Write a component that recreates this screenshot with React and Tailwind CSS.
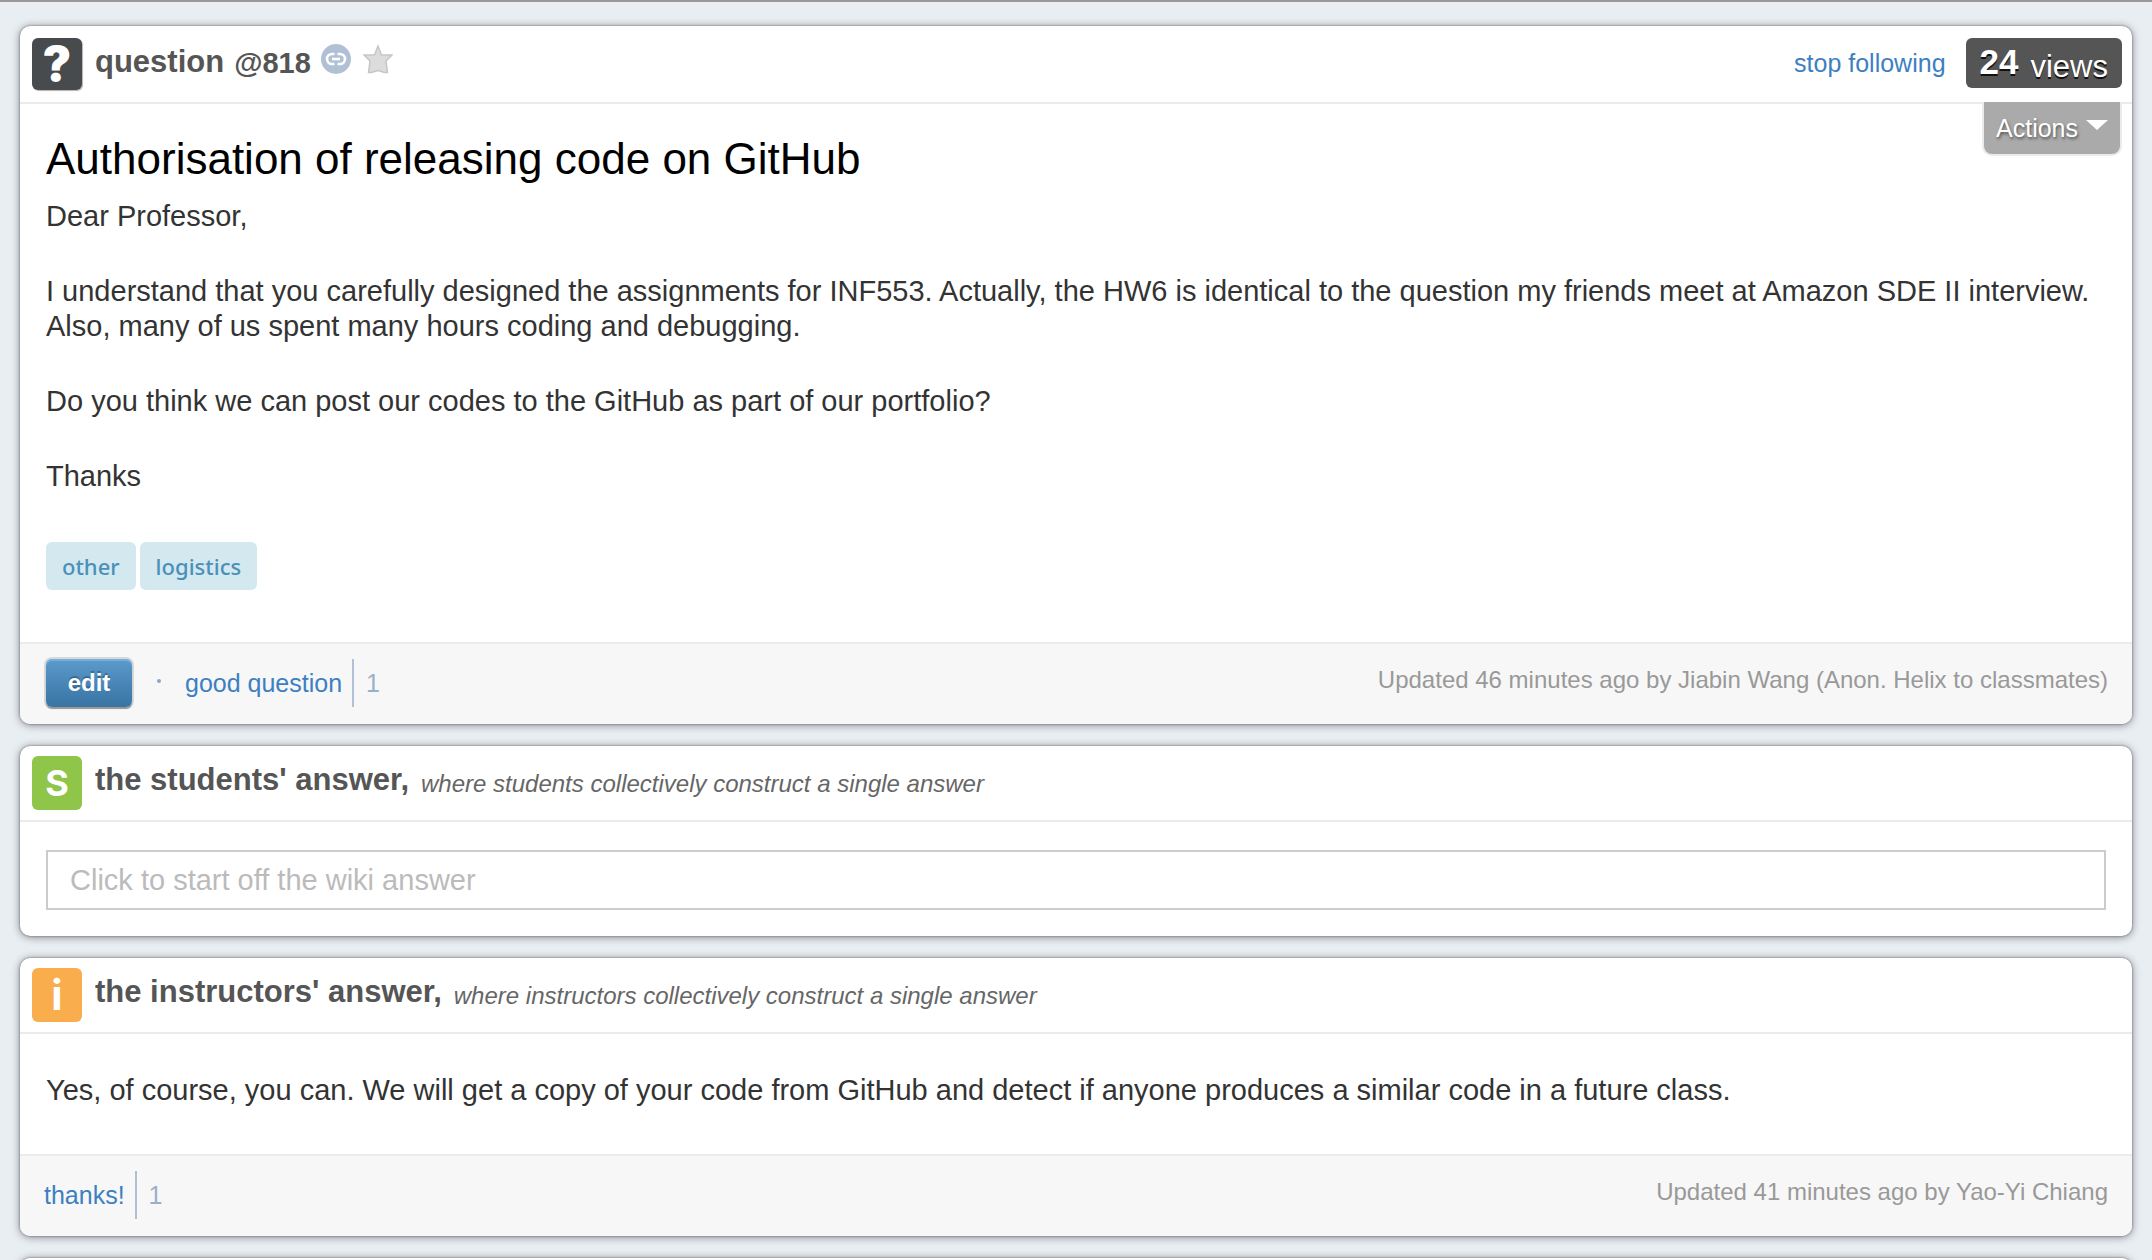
import React from "react";

const small = "text-[25px] leading-[30px]";
const note = "text-[24px]";
const link = "text-[#3d7fc1] hover:underline";

function Card({ children, className = "" }) {
  return (
    <section className={`rounded-[10px] bg-white shadow-[0_0_2px_rgba(0,0,0,0.5),0_1px_8px_rgba(0,0,0,0.45)] ${className}`}>
      {children}
    </section>
  );
}

function Badge({ className, children }) {
  return (
    <span
      aria-hidden="true"
      className={`flex w-[50px] shrink-0 items-center justify-center rounded-md leading-none text-white ${className}`}
    >
      {children}
    </span>
  );
}

function LinkIcon() {
  return (
    <svg viewBox="0 0 30 30" className="size-[30px]" aria-hidden="true">
      <circle cx="15" cy="15" r="15" fill="#b1c1d5" />
      <g fill="none" stroke="#fff" strokeWidth="2.6">
        <path d="M13.500 10H11a5 5 0 0 0 0 10h2.500M16.500 10H19a5 5 0 0 1 0 10h-2.500" />
        <path d="M11 15h8" />
      </g>
    </svg>
  );
}

function StarIcon() {
  return (
    <svg viewBox="0 0 30 30" className="size-[30px]" aria-hidden="true">
      <path
        d="M15 2l3.500 9H29l-6 6 1.500 11.500h-3L15 26.500l-6.500 2h-3L7 17l-6-6h10.500z"
        fill="#dcdcdc"
        stroke="#c6c6c6"
        strokeWidth="1.500"
      />
    </svg>
  );
}

function AnswerHeader({ badge, letter, title, hint }) {
  return (
    <header className="flex h-[76px] items-start gap-[13px] border-b-2 border-[#ebebeb] px-3 pt-2.5">
      <Badge className={`h-[54px] font-['Inter',sans-serif] ${badge}`}>{letter}</Badge>
      <div className="flex items-end gap-3">
        <h2 className="text-[31px] font-bold leading-[48px] text-[#555]">{title}</h2>
        <p className={`${note} leading-10 italic text-[#666]`}>{hint}</p>
      </div>
    </header>
  );
}

function Vote({ label, count }) {
  return (
    <div className="flex h-12 items-center">
      <a href="#vote" className={`${small} ${link} pr-2.5`}>{label}</a>
      <span className={`${small} flex h-12 items-center border-l-2 border-[#b1c1d5] pl-3 text-[#9ab0c9]`}>{count}</span>
    </div>
  );
}

function Footer({ children, updated, className }) {
  return (
    <footer className={`flex h-[82px] items-start justify-between rounded-b-[10px] border-t-2 border-[#ebebeb] bg-[#f7f7f7] pr-6 ${className}`}>
      <div className="flex pt-[15px]">{children}</div>
      <p className={`${note} pt-[21px] leading-[30px] text-[#999]`}>{updated}</p>
    </footer>
  );
}

function Tag({ children }) {
  return (
    <a
      href="#tag"
      className="flex h-12 items-center rounded-md bg-[#d4e8f0] px-4 font-['Noto_Sans',sans-serif] text-[22px] font-medium text-[#4a90b8]"
    >
      {children}
    </a>
  );
}

export default function App() {
  return (
    <main className="h-screen overflow-hidden border-t-2 border-[#999] bg-[#e9eef3] px-5 pt-6 font-['Liberation_Sans',Arial,sans-serif]">
      <div className="flex flex-col gap-[22px]">
        <Card>
          <header className="flex h-[78px] items-start justify-between border-b-2 border-[#ebebeb] pl-3 pr-2.5 pt-3">
            <div className="flex items-start gap-[13px]">
              <Badge className="h-[52px] bg-[#474b4e] font-['Inter',sans-serif] text-[48px] font-black shadow-[1px_1px_1px_rgba(0,0,0,0.3)]">?</Badge>
              <div className="flex items-start gap-2.5 text-[#555]">
                <h2 className="text-[31px] font-bold leading-[48px]">question</h2>
                <span className="text-[29px] font-bold leading-[50px]">@818</span>
                <button type="button" aria-label="Copy link" className="cursor-pointer pt-1.5">
                  <LinkIcon />
                </button>
                <button type="button" aria-label="Favorite" className="cursor-pointer pl-0.5 pt-1.5">
                  <StarIcon />
                </button>
              </div>
            </div>
            <div className="flex items-start gap-5">
              <a href="#follow" className={`${small} ${link} pt-2.5`}>stop following</a>
              <div className="relative">
                <p className="flex h-[50px] items-start gap-3 rounded-md bg-[#555] px-3.5 text-white [text-shadow:0_2px_0_#111]">
                  <span className="text-[35px] font-bold leading-[48px]">24</span>
                  <span className="text-[31px] leading-[58px]">views</span>
                </p>
                <button
                  type="button"
                  className={`${small} absolute right-0 top-16 flex h-[54px] cursor-pointer items-center gap-2 whitespace-nowrap rounded-b-[10px] border-2 border-t-0 border-[#ebebeb] bg-[#aaa] px-3 text-white [text-shadow:1px_2px_3px_rgba(0,0,0,0.5)]`}
                >
                  Actions
                  <svg viewBox="0 0 22 10" className="mb-1.5 h-2.5 w-[22px]" aria-hidden="true">
                    <path d="M0 0h22L11 10z" fill="#fff" />
                  </svg>
                </button>
              </div>
            </div>
          </header>

          <div className="px-[26px] pb-[52px] pt-[25px]">
            <h1 className="text-[44px] leading-[60px] text-black">Authorisation of releasing code on GitHub</h1>
            <div className="flex flex-col gap-10 pt-2.5 text-[29px] leading-[35px] text-[#333]">
              <p>Dear Professor,</p>
              <p>
                I understand that you carefully designed the assignments for INF553. Actually, the HW6 is identical to the
                question my friends meet at Amazon SDE II interview. Also, many of us spent many hours coding and debugging.
              </p>
              <p>Do you think we can post our codes to the GitHub as part of our portfolio?</p>
              <p>Thanks</p>
            </div>
            <div className="flex gap-1 pt-12">
              <Tag>other</Tag>
              <Tag>logistics</Tag>
            </div>
          </div>

          <Footer className="pl-[26px]" updated="Updated 46 minutes ago by Jiabin Wang (Anon. Helix to classmates)">
            <button
              type="button"
              className="h-12 w-[86px] cursor-pointer rounded-md bg-linear-to-b from-[#5b9acb] to-[#3874a4] text-[24px] font-bold leading-[30px] text-white shadow-[inset_0_2px_0_#78aedb,0_0_0_2px_rgba(0,0,0,0.12),0_2px_1px_rgba(0,0,0,0.3)] [text-shadow:0_-2px_0_rgba(0,0,0,0.25)]"
            >
              edit
            </button>
            <span className="flex w-[53px] items-center justify-center pb-1" aria-hidden="true">
              <span className="size-1 rounded-full bg-[#8fa6c0]" />
            </span>
            <Vote label="good question" count="1" />
          </Footer>
        </Card>

        <Card>
          <AnswerHeader
            badge="bg-[#8fc549] text-[36px] font-bold"
            letter="S"
            title="the students' answer,"
            hint="where students collectively construct a single answer"
          />
          <div className="px-[26px] pb-[26px] pt-7">
            <input
              type="text"
              aria-label="Students' answer"
              placeholder="Click to start off the wiki answer"
              className="block h-[60px] w-full border-2 border-[#ccc] px-[22px] text-[29px] text-[#333] placeholder:text-[#bbb]"
            />
          </div>
        </Card>

        <Card>
          <AnswerHeader
            badge="bg-[#faad4c] text-[42px] font-bold"
            letter="i"
            title="the instructors' answer,"
            hint="where instructors collectively construct a single answer"
          />
          <p className="px-[26px] pb-[46px] pt-[39px] text-[29px] leading-[35px] text-[#333]">
            Yes, of course, you can. We will get a copy of your code from GitHub and detect if anyone produces a similar
            code in a future class.
          </p>
          <Footer className="pl-6" updated="Updated 41 minutes ago by Yao-Yi Chiang">
            <Vote label="thanks!" count="1" />
          </Footer>
        </Card>

        <Card className="h-20">{null}</Card>
      </div>
    </main>
  );
}
